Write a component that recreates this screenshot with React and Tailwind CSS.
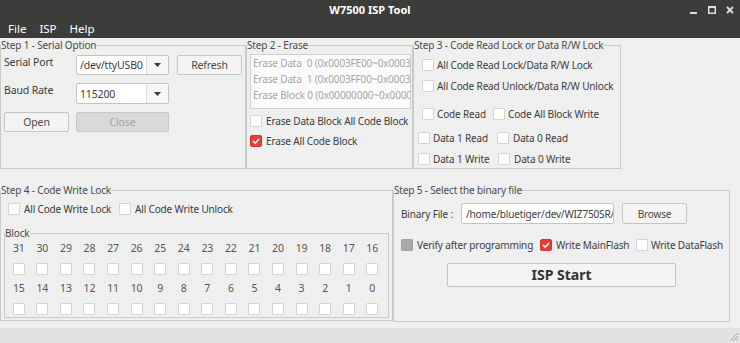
import React from 'react';

const font = { fontFamily: '"Noto Sans", "DejaVu Sans", sans-serif' };

const Check = ({ checked, disabled }) => (
  <span
    className={
      checked
        ? 'w-[12px] h-[12px] shrink-0 rounded-[2px] bg-[#e2403a] border border-[#d3352f] flex items-center justify-center'
        : disabled
        ? 'w-[12px] h-[12px] shrink-0 rounded-[1px] bg-[#a9a9a9] border border-[#a3a3a3]'
        : 'w-[12px] h-[12px] shrink-0 rounded-[1px] bg-white border border-[#d4d4d4]'
    }
  >
    {checked && (
      <svg width="10" height="10" viewBox="0 0 10 10">
        <polyline points="2,5 4.2,7.2 8,3" fill="none" stroke="white" strokeWidth="1.6" />
      </svg>
    )}
  </span>
);

const CheckItem = ({ label, checked, disabled, gap = 'gap-[3px]', className = '' }) => (
  <div className={`flex items-center ${gap} ${className}`}>
    <Check checked={checked} disabled={disabled} />
    <span className="whitespace-nowrap">{label}</span>
  </div>
);

const Button = ({ children, disabled, className = '' }) => (
  <div
    className={
      disabled
        ? `flex items-center justify-center rounded-[2px] border border-[#c8c8c8] bg-[#d9d9d9] text-[#a4a4a4] ${className}`
        : `flex items-center justify-center rounded-[2px] border border-[#c4c4c4] bg-[#f4f4f4] text-[#4a4a4a] ${className}`
    }
  >
    {children}
  </div>
);

const Combo = ({ value, className = '' }) => (
  <div className={`flex rounded-[2px] border border-[#c4c4c4] bg-white overflow-hidden ${className}`}>
    <div className="flex-1 flex items-center pl-[3px] text-[#3c3c3c] whitespace-nowrap">{value}</div>
    <div className="w-[22px] flex items-center justify-center border-l border-[#dcdcdc] bg-[#f7f7f7]">
      <svg width="7" height="4" viewBox="0 0 7 4">
        <polygon points="0,0 7,0 3.5,4" fill="#3a3a3a" />
      </svg>
    </div>
  </div>
);

const Legend = ({ children }) => (
  <legend className="p-0 leading-[10px] text-[#4a4a4a] whitespace-nowrap">{children}</legend>
);

const topBlocks = [31, 30, 29, 28, 27, 26, 25, 24, 23, 22, 21, 20, 19, 18, 17, 16];
const bottomBlocks = [15, 14, 13, 12, 11, 10, 9, 8, 7, 6, 5, 4, 3, 2, 1, 0];

const BlockRows = ({ nums, top }) => (
  <>
    <div className={`grid grid-cols-16 ${top}`}>
      {nums.map((n) => (
        <div key={n} className="text-center leading-[12px] text-[#555]">{n}</div>
      ))}
    </div>
    <div className="grid grid-cols-16 mt-[9px]">
      {nums.map((n) => (
        <div key={n} className="flex justify-center">
          <Check />
        </div>
      ))}
    </div>
  </>
);

export default function App() {
  return (
    <div className="w-[740px] h-[343px] bg-[#efefef] flex flex-col text-[10px] leading-[12px] tracking-[-0.15px] text-[#3c3c3c] overflow-hidden" style={font}>
      {/* title + menu */}
      <div className="bg-[#3c3c3b] h-[38px] flex flex-col tracking-normal">
        <div className="h-[20px] grid grid-cols-[1fr_auto_1fr] items-center">
          <div />
          <div className="text-white font-bold text-[11px] leading-[14px]">W7500 ISP Tool</div>
          <div className="flex justify-end items-center gap-[10px] pr-[6px]">
            <svg width="8" height="8" viewBox="0 0 8 8">
              <rect x="0" y="6" width="7" height="2" fill="#dedede" />
            </svg>
            <svg width="8" height="8" viewBox="0 0 8 8">
              <rect x="0.75" y="0.75" width="6.5" height="6.5" fill="none" stroke="#dedede" strokeWidth="1.5" />
              <rect x="0" y="0" width="8" height="2" fill="#dedede" />
            </svg>
            <svg width="8" height="8" viewBox="0 0 8 8">
              <path d="M1 1 L7 7 M7 1 L1 7" stroke="#dedede" strokeWidth="1.8" />
            </svg>
          </div>
        </div>
        <div className="h-[18px] flex items-center gap-[13px] pl-[8px] text-white text-[11.5px] leading-[14px]">
          <span>File</span>
          <span>ISP</span>
          <span>Help</span>
        </div>
      </div>

      {/* top row */}
      <div className="flex mt-[2px]">
        <fieldset className="min-w-0 w-[246px] h-[129px] border border-[#c9c9c9]">
          <Legend>Step 1 - Serial Option</Legend>
          <div className="pl-[3px] pt-[5px] flex flex-col text-[10.5px]">
            <div className="flex items-start h-[20px]">
              <div className="w-[72px] pt-[1px]">Serial Port</div>
              <Combo value="/dev/ttyUSB0" className="w-[93px] h-[20px]" />
              <Button className="ml-[8px] w-[65px] h-[20px]">Refresh</Button>
            </div>
            <div className="flex items-start h-[21px] mt-[8px]">
              <div className="w-[72px] pt-[1px]">Baud Rate</div>
              <Combo value="115200" className="w-[93px] h-[21px]" />
            </div>
            <div className="flex mt-[8px]">
              <Button className="w-[65px] h-[20px]">Open</Button>
              <Button disabled className="ml-[7px] w-[93px] h-[20px]">Close</Button>
            </div>
          </div>
        </fieldset>

        <fieldset className="min-w-0 w-[167px] h-[129px] border border-[#c9c9c9]">
          <Legend>Step 2 - Erase</Legend>
          <div className="pl-[3px] pr-[1px] pt-[4px]">
            <div className="h-[55px] border border-[#cfcfcf] bg-[#fcfcfc] overflow-hidden pl-[2px] text-[#a5a5a5] whitespace-pre leading-[16px]">
              <div>Erase Data  0 (0x0003FE00~0x0003FEFF)</div>
              <div>Erase Data  1 (0x0003FF00~0x0003FFFF)</div>
              <div>Erase Block 0 (0x00000000~0x00000FFF)</div>
            </div>
            <CheckItem className="mt-[6px] gap-[4px]" label="Erase Data Block All Code Block" />
            <CheckItem className="mt-[8px] gap-[4px]" checked label="Erase All Code Block" />
          </div>
        </fieldset>

        <fieldset className="min-w-0 w-[208px] h-[129px] border border-[#c9c9c9]">
          <Legend>Step 3 - Code Read Lock or Data R/W Lock</Legend>
          <div className="pt-[9px] flex flex-col">
            <CheckItem className="ml-[8px]" label="All Code Read Lock/Data R/W Lock" />
            <CheckItem className="ml-[8px] mt-[9px]" label="All Code Read Unlock/Data R/W Unlock" />
            <div className="flex ml-[8px] mt-[16px]">
              <CheckItem className="w-[71px]" label="Code Read" />
              <CheckItem label="Code All Block Write" />
            </div>
            <div className="flex ml-[4px] mt-[12px]">
              <CheckItem className="w-[79px]" label="Data 1 Read" />
              <CheckItem gap="gap-[4px]" label="Data 0 Read" />
            </div>
            <div className="flex ml-[4px] mt-[9px]">
              <CheckItem className="w-[80px]" label="Data 1 Write" />
              <CheckItem gap="gap-[4px]" label="Data 0 Write" />
            </div>
          </div>
        </fieldset>
      </div>

      {/* bottom row */}
      <div className="flex mt-[16px]">
        <fieldset className="min-w-0 w-[393px] h-[136px] border border-[#c9c9c9]">
          <Legend>Step 4 - Code Write Lock</Legend>
          <div className="pt-[8px]">
            <div className="flex pl-[7px]">
              <CheckItem className="w-[111px] gap-[4px]" label="All Code Write Lock" />
              <CheckItem className="gap-[4px]" label="All Code Write Unlock" />
            </div>
            <fieldset className="min-w-0 ml-[3px] mt-[13px] w-[385px] h-[90px] border border-[#c9c9c9]">
              <Legend>Block</Legend>
              <div className="pl-[2px] pr-[4px] text-[10.5px]">
                <BlockRows nums={topBlocks} top="mt-[4px]" />
                <BlockRows nums={bottomBlocks} top="mt-[7px]" />
              </div>
            </fieldset>
          </div>
        </fieldset>

        <fieldset className="min-w-0 w-[337px] h-[137px] border border-[#c9c9c9]">
          <Legend>Step 5 - Select the binary file</Legend>
          <div className="pt-[8px] pl-[7px] flex flex-col">
            <div className="flex items-center">
              <div className="w-[60px] whitespace-nowrap">Binary File :</div>
              <div className="w-[153px] h-[21px] border border-[#c4c4c4] rounded-[2px] bg-white flex items-center pl-[4px] overflow-hidden whitespace-nowrap">
                /home/bluetiger/dev/WIZ750SR/
              </div>
              <Button className="ml-[8px] w-[65px] h-[21px]">Browse</Button>
            </div>
            <div className="flex mt-[15px]">
              <CheckItem className="w-[139px] gap-[4px]" disabled label="Verify after programming" />
              <CheckItem className="w-[96px] gap-[4px]" checked label="Write MainFlash" />
              <CheckItem className="gap-[3px]" label="Write DataFlash" />
            </div>
            <Button className="ml-[46px] mt-[12px] w-[229px] h-[24px] text-[14px] leading-[16px] tracking-normal font-bold text-[#333]">ISP Start</Button>
          </div>
        </fieldset>
      </div>

      {/* status bar */}
      <div className="mt-auto h-[15px] bg-[#e2e2e2] flex justify-end items-end">
        <svg width="12" height="12" viewBox="0 0 12 12" className="mr-[1px] mb-[1px]">
          <path d="M11 3 L3 11 M11 6 L6 11 M11 9 L9 11" stroke="#a8a8a8" strokeWidth="1" />
        </svg>
      </div>
    </div>
  );
}
